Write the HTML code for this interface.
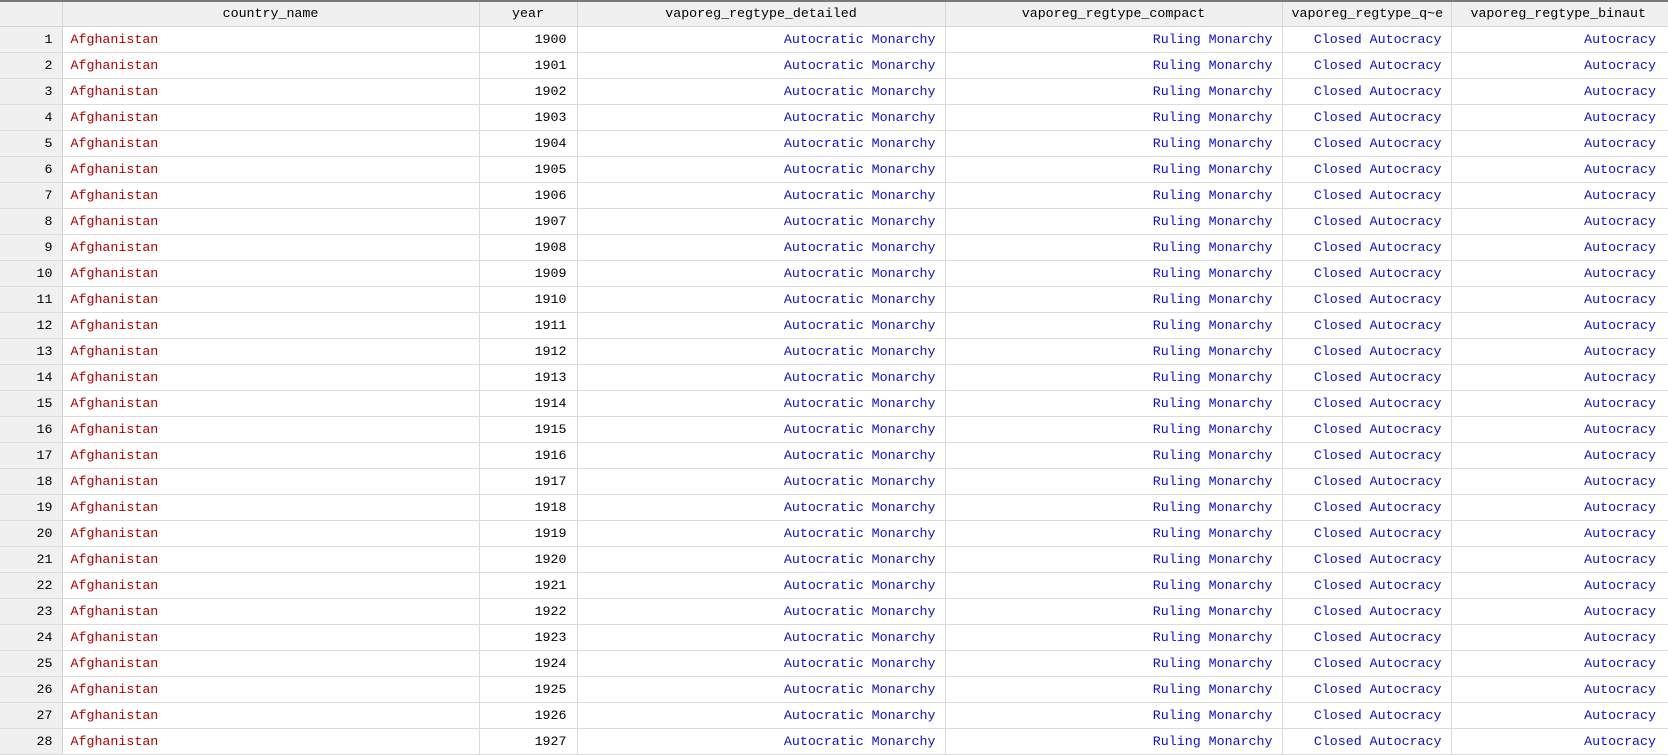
<!DOCTYPE html>
<html><head><meta charset="utf-8"><style>
html,body{margin:0;padding:0;background:#fff;width:1668px;height:749px;overflow:hidden}
body{font-family:"Courier New","Nimbus Mono PS","Liberation Mono",monospace;font-size:13.3px}
.top{position:absolute;left:0;top:0;width:1668px;height:2px;background:#7a7a7a}
table{position:absolute;left:0;top:2px;border-collapse:collapse;table-layout:fixed;width:1668px}
td,th{height:25px;padding:0 9px;border-right:1px solid #dcdcdc;border-bottom:1px solid #dcdcdc;white-space:nowrap;overflow:hidden;line-height:25px}
th{font-weight:normal;background:#f0f0f0;color:#000;text-align:center;border-right:1px solid #d8d8d8;border-bottom:1px solid #d4d4d4;height:24px;line-height:24px}
td.i{background:#f0f0f0;text-align:right;color:#000;border-right:1px solid #d4d4d4}
td.c{color:#b00000;text-align:left;padding-left:8px}
td.y{text-align:right;color:#000;padding-right:10px}
td.b{color:#1010c8;text-align:right}
td:nth-child(7),th:nth-child(7),td:last-child,th:last-child{border-right:none}
</style></head><body>
<div class="top"></div>
<table>
<colgroup><col style="width:62px"><col style="width:417px"><col style="width:98px"><col style="width:368px"><col style="width:337px"><col style="width:169px"><col style="width:214px"><col style="width:3px"></colgroup>
<tr><th></th><th>country_name</th><th>year</th><th>vaporeg_regtype_detailed</th><th>vaporeg_regtype_compact</th><th>vaporeg_regtype_q~e</th><th>vaporeg_regtype_binaut</th><th></th></tr>
<tr><td class="i">1</td><td class="c">Afghanistan</td><td class="y">1900</td><td class="b">Autocratic Monarchy</td><td class="b">Ruling Monarchy</td><td class="b">Closed Autocracy</td><td class="b">Autocracy</td><td></td></tr>
<tr><td class="i">2</td><td class="c">Afghanistan</td><td class="y">1901</td><td class="b">Autocratic Monarchy</td><td class="b">Ruling Monarchy</td><td class="b">Closed Autocracy</td><td class="b">Autocracy</td><td></td></tr>
<tr><td class="i">3</td><td class="c">Afghanistan</td><td class="y">1902</td><td class="b">Autocratic Monarchy</td><td class="b">Ruling Monarchy</td><td class="b">Closed Autocracy</td><td class="b">Autocracy</td><td></td></tr>
<tr><td class="i">4</td><td class="c">Afghanistan</td><td class="y">1903</td><td class="b">Autocratic Monarchy</td><td class="b">Ruling Monarchy</td><td class="b">Closed Autocracy</td><td class="b">Autocracy</td><td></td></tr>
<tr><td class="i">5</td><td class="c">Afghanistan</td><td class="y">1904</td><td class="b">Autocratic Monarchy</td><td class="b">Ruling Monarchy</td><td class="b">Closed Autocracy</td><td class="b">Autocracy</td><td></td></tr>
<tr><td class="i">6</td><td class="c">Afghanistan</td><td class="y">1905</td><td class="b">Autocratic Monarchy</td><td class="b">Ruling Monarchy</td><td class="b">Closed Autocracy</td><td class="b">Autocracy</td><td></td></tr>
<tr><td class="i">7</td><td class="c">Afghanistan</td><td class="y">1906</td><td class="b">Autocratic Monarchy</td><td class="b">Ruling Monarchy</td><td class="b">Closed Autocracy</td><td class="b">Autocracy</td><td></td></tr>
<tr><td class="i">8</td><td class="c">Afghanistan</td><td class="y">1907</td><td class="b">Autocratic Monarchy</td><td class="b">Ruling Monarchy</td><td class="b">Closed Autocracy</td><td class="b">Autocracy</td><td></td></tr>
<tr><td class="i">9</td><td class="c">Afghanistan</td><td class="y">1908</td><td class="b">Autocratic Monarchy</td><td class="b">Ruling Monarchy</td><td class="b">Closed Autocracy</td><td class="b">Autocracy</td><td></td></tr>
<tr><td class="i">10</td><td class="c">Afghanistan</td><td class="y">1909</td><td class="b">Autocratic Monarchy</td><td class="b">Ruling Monarchy</td><td class="b">Closed Autocracy</td><td class="b">Autocracy</td><td></td></tr>
<tr><td class="i">11</td><td class="c">Afghanistan</td><td class="y">1910</td><td class="b">Autocratic Monarchy</td><td class="b">Ruling Monarchy</td><td class="b">Closed Autocracy</td><td class="b">Autocracy</td><td></td></tr>
<tr><td class="i">12</td><td class="c">Afghanistan</td><td class="y">1911</td><td class="b">Autocratic Monarchy</td><td class="b">Ruling Monarchy</td><td class="b">Closed Autocracy</td><td class="b">Autocracy</td><td></td></tr>
<tr><td class="i">13</td><td class="c">Afghanistan</td><td class="y">1912</td><td class="b">Autocratic Monarchy</td><td class="b">Ruling Monarchy</td><td class="b">Closed Autocracy</td><td class="b">Autocracy</td><td></td></tr>
<tr><td class="i">14</td><td class="c">Afghanistan</td><td class="y">1913</td><td class="b">Autocratic Monarchy</td><td class="b">Ruling Monarchy</td><td class="b">Closed Autocracy</td><td class="b">Autocracy</td><td></td></tr>
<tr><td class="i">15</td><td class="c">Afghanistan</td><td class="y">1914</td><td class="b">Autocratic Monarchy</td><td class="b">Ruling Monarchy</td><td class="b">Closed Autocracy</td><td class="b">Autocracy</td><td></td></tr>
<tr><td class="i">16</td><td class="c">Afghanistan</td><td class="y">1915</td><td class="b">Autocratic Monarchy</td><td class="b">Ruling Monarchy</td><td class="b">Closed Autocracy</td><td class="b">Autocracy</td><td></td></tr>
<tr><td class="i">17</td><td class="c">Afghanistan</td><td class="y">1916</td><td class="b">Autocratic Monarchy</td><td class="b">Ruling Monarchy</td><td class="b">Closed Autocracy</td><td class="b">Autocracy</td><td></td></tr>
<tr><td class="i">18</td><td class="c">Afghanistan</td><td class="y">1917</td><td class="b">Autocratic Monarchy</td><td class="b">Ruling Monarchy</td><td class="b">Closed Autocracy</td><td class="b">Autocracy</td><td></td></tr>
<tr><td class="i">19</td><td class="c">Afghanistan</td><td class="y">1918</td><td class="b">Autocratic Monarchy</td><td class="b">Ruling Monarchy</td><td class="b">Closed Autocracy</td><td class="b">Autocracy</td><td></td></tr>
<tr><td class="i">20</td><td class="c">Afghanistan</td><td class="y">1919</td><td class="b">Autocratic Monarchy</td><td class="b">Ruling Monarchy</td><td class="b">Closed Autocracy</td><td class="b">Autocracy</td><td></td></tr>
<tr><td class="i">21</td><td class="c">Afghanistan</td><td class="y">1920</td><td class="b">Autocratic Monarchy</td><td class="b">Ruling Monarchy</td><td class="b">Closed Autocracy</td><td class="b">Autocracy</td><td></td></tr>
<tr><td class="i">22</td><td class="c">Afghanistan</td><td class="y">1921</td><td class="b">Autocratic Monarchy</td><td class="b">Ruling Monarchy</td><td class="b">Closed Autocracy</td><td class="b">Autocracy</td><td></td></tr>
<tr><td class="i">23</td><td class="c">Afghanistan</td><td class="y">1922</td><td class="b">Autocratic Monarchy</td><td class="b">Ruling Monarchy</td><td class="b">Closed Autocracy</td><td class="b">Autocracy</td><td></td></tr>
<tr><td class="i">24</td><td class="c">Afghanistan</td><td class="y">1923</td><td class="b">Autocratic Monarchy</td><td class="b">Ruling Monarchy</td><td class="b">Closed Autocracy</td><td class="b">Autocracy</td><td></td></tr>
<tr><td class="i">25</td><td class="c">Afghanistan</td><td class="y">1924</td><td class="b">Autocratic Monarchy</td><td class="b">Ruling Monarchy</td><td class="b">Closed Autocracy</td><td class="b">Autocracy</td><td></td></tr>
<tr><td class="i">26</td><td class="c">Afghanistan</td><td class="y">1925</td><td class="b">Autocratic Monarchy</td><td class="b">Ruling Monarchy</td><td class="b">Closed Autocracy</td><td class="b">Autocracy</td><td></td></tr>
<tr><td class="i">27</td><td class="c">Afghanistan</td><td class="y">1926</td><td class="b">Autocratic Monarchy</td><td class="b">Ruling Monarchy</td><td class="b">Closed Autocracy</td><td class="b">Autocracy</td><td></td></tr>
<tr><td class="i">28</td><td class="c">Afghanistan</td><td class="y">1927</td><td class="b">Autocratic Monarchy</td><td class="b">Ruling Monarchy</td><td class="b">Closed Autocracy</td><td class="b">Autocracy</td><td></td></tr>
</table>
</body></html>
